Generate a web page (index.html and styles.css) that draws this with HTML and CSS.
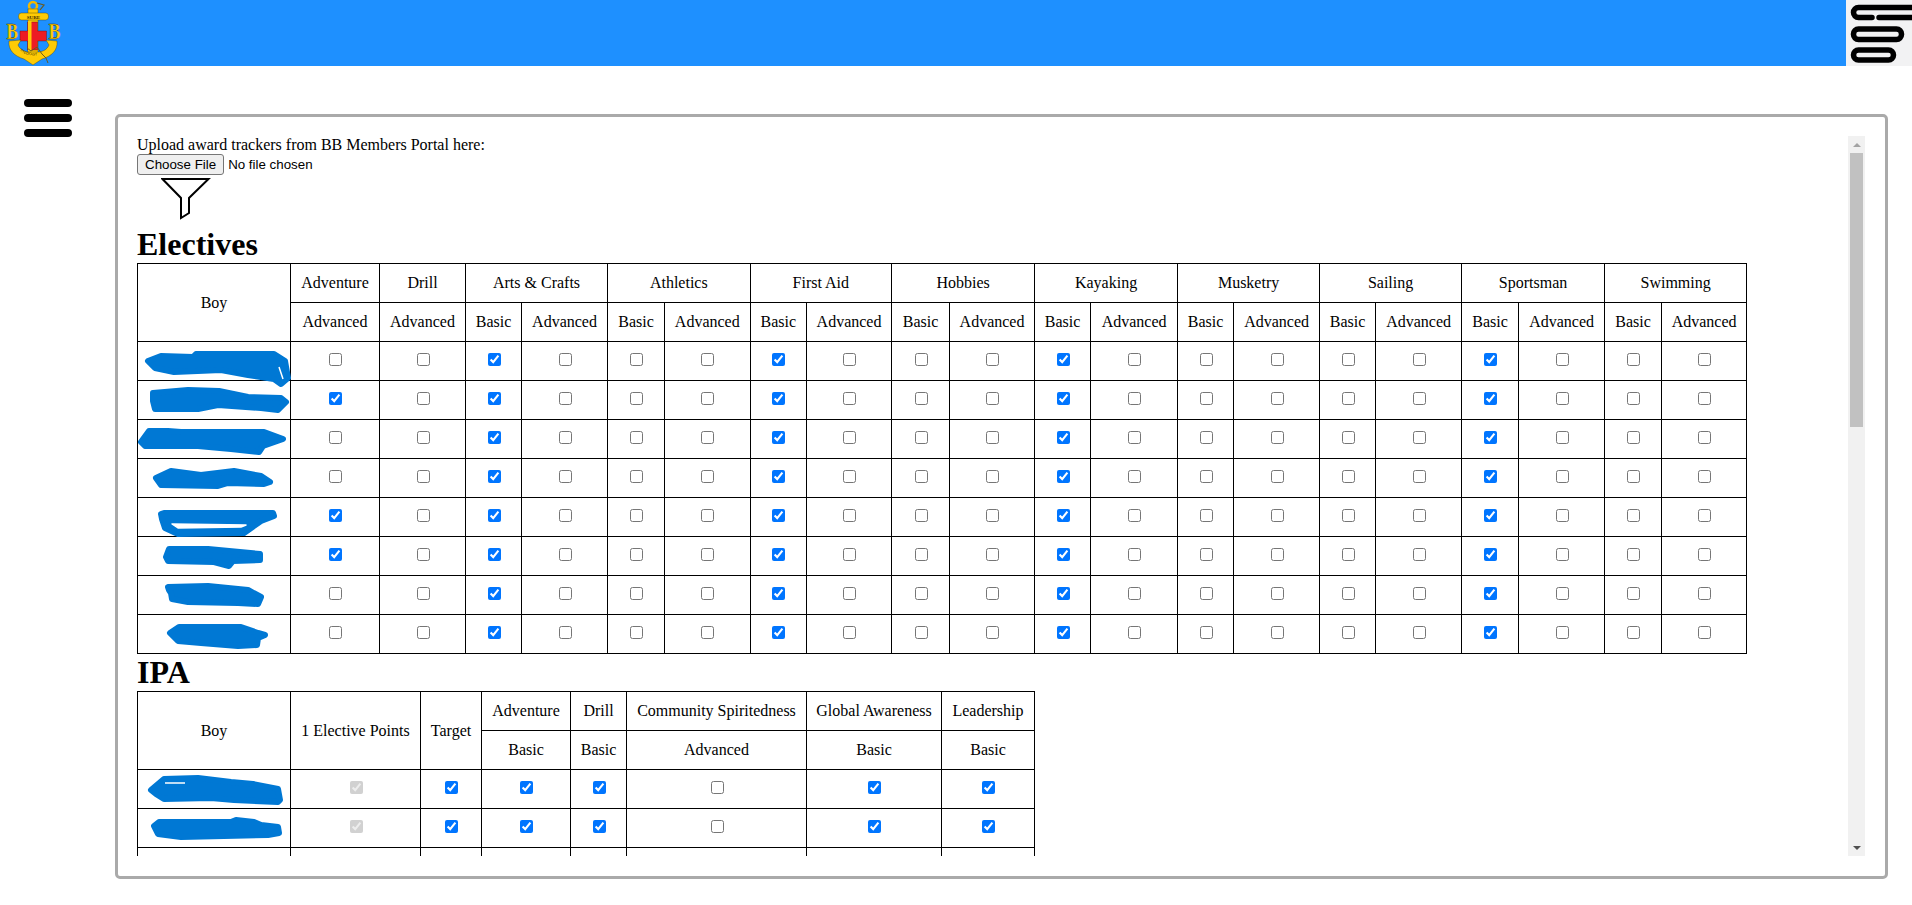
FILE: index.html
```html
<!DOCTYPE html>
<html lang="en">
<head>
    <meta charset="UTF-8">
    <meta name="viewport" content="width=device-width, initial-scale=1.0">
    <title>Award Tracker</title>
    <link rel="stylesheet" href="styles.css">
</head>
<body>
    <div class="header">
        <svg class="logo" viewBox="0 0 66 66">
            <circle cx="33" cy="6" r="4" fill="none" stroke="#f2b800" stroke-width="2.5"/>
            <path d="M37 3 L44 5 L40 10" fill="none" stroke="#6a5a20" stroke-width="1.2"/>
            <rect x="28" y="9" width="10" height="48" fill="#ffcb05" stroke="#4a3c00" stroke-width=".4"/>
            <path d="M27.5 22 H37.5 V31 H46.5 V41 H37.5 V50 H27.5 V41 H20 V31 H27.5 Z" fill="#ed1c24" stroke="#5a1010" stroke-width=".4"/>
            <rect x="28" y="21" width="3.5" height="30" fill="#ffcb05"/>
            <rect x="18.5" y="13" width="30" height="7" rx="3" fill="#ffcb05" stroke="#4a3c00" stroke-width=".4"/>
            <text class="logo-motto" x="33.5" y="18.6" text-anchor="middle">SURE</text>
            <text class="logo-letter" x="6.5" y="38.5" textLength="11.5" lengthAdjust="spacingAndGlyphs">B</text>
            <text class="logo-letter" x="48.5" y="38.5" textLength="12" lengthAdjust="spacingAndGlyphs">B</text>
            <path d="M9 41 L21 40 L18 45 C20 50 26 52 28 52 L38 52 C42 52 47 50 49 45 L46 40 L57 41 C58 50 52 56 42 59 L33 65 L24 59 C14 56 8 50 9 41 Z" fill="#ffcb05" stroke="#4a3c00" stroke-width=".4"/>
            <path d="M27 48 L31 51 L37 47 L42 54 L46 58 L48 63" fill="none" stroke="#6a5a20" stroke-width="1"/>
            <path id="logo-arc" d="M20 50 C26 57 40 57 46 52" fill="none"/>
            <text class="logo-small"><textPath href="#logo-arc">STEDFAST</textPath></text>
        </svg>
        <div class="menu-button">
            <svg viewBox="0 0 66 66" width="66" height="66">
                <path d="M66 7.5 H12.5 a5 5 0 0 0 0 10 H26 M33 17.5 H66" fill="none" stroke="#000" stroke-width="5.5" stroke-linecap="round"/>
                <rect x="7.5" y="29" width="48" height="10.5" rx="5" fill="none" stroke="#000" stroke-width="5.5"/>
                <rect x="7.5" y="50" width="40" height="10" rx="5" fill="none" stroke="#000" stroke-width="5.5"/>
            </svg>
        </div>
    </div>

    <div class="main">
        <div class="sidebar">
            <div class="burger">
                <span class="burger-bar"></span>
                <span class="burger-bar"></span>
                <span class="burger-bar"></span>
            </div>
        </div>

        <div class="panel">
            <div class="panel-scroll">
                <div class="panel-content">
                    Upload award trackers from BB Members Portal here:<br>
                    <input class="file-input" type="file"><br>
                    <svg class="filter-icon" viewBox="0 0 50 51" width="50" height="51">
                        <path d="M1.5 4 H47.5 L28 23 V38 L20 43 V23 Z" fill="#fff" stroke="#000" stroke-width="2"/>
                    </svg>

                    <h1 class="section-title">Electives</h1>
                    <table class="tracker electives">
                        <colgroup>
                            <col width="153"><col width="89"><col width="86">
                            <col width="56"><col width="86"><col width="57"><col width="85.5"><col width="56.5"><col width="85">
                            <col width="58"><col width="85"><col width="56"><col width="87"><col width="56"><col width="86">
                            <col width="56"><col width="86"><col width="57"><col width="86"><col width="57"><col width="85">
                        </colgroup>
                        <tr>
                            <th rowspan="2">Boy</th>
                            <th>Adventure</th><th>Drill</th>
                            <th colspan="2">Arts &amp; Crafts</th><th colspan="2">Athletics</th><th colspan="2">First Aid</th>
                            <th colspan="2">Hobbies</th><th colspan="2">Kayaking</th><th colspan="2">Musketry</th>
                            <th colspan="2">Sailing</th><th colspan="2">Sportsman</th><th colspan="2">Swimming</th>
                        </tr>
                        <tr>
                            <th>Advanced</th><th>Advanced</th>
                            <th>Basic</th><th>Advanced</th><th>Basic</th><th>Advanced</th><th>Basic</th><th>Advanced</th>
                            <th>Basic</th><th>Advanced</th><th>Basic</th><th>Advanced</th><th>Basic</th><th>Advanced</th>
                            <th>Basic</th><th>Advanced</th><th>Basic</th><th>Advanced</th><th>Basic</th><th>Advanced</th>
                        </tr>
                        <tr>
                            <td class="boy"><svg class="scribble" viewBox="0 0 152 38"><path id="boy1" d="M10 19 L23 14 L55 15 L58 12 L136 12 L147 19 L150 36 L143 42 L136 37 L110 33 L83 28 L36 30 L17 26 Z"/><path class="scribble-gap" d="M141 25 L145 37"/></svg></td>
                            <td><input type="checkbox"></td><td><input type="checkbox"></td>
                            <td><input type="checkbox" checked></td><td><input type="checkbox"></td><td><input type="checkbox"></td><td><input type="checkbox"></td><td><input type="checkbox" checked></td><td><input type="checkbox"></td>
                            <td><input type="checkbox"></td><td><input type="checkbox"></td><td><input type="checkbox" checked></td><td><input type="checkbox"></td><td><input type="checkbox"></td><td><input type="checkbox"></td>
                            <td><input type="checkbox"></td><td><input type="checkbox"></td><td><input type="checkbox" checked></td><td><input type="checkbox"></td><td><input type="checkbox"></td><td><input type="checkbox"></td>
                        </tr>
                        <tr>
                            <td class="boy"><svg class="scribble" viewBox="0 0 152 38"><path id="boy2" d="M15 12 L50 9 L81 10 L110 16 L143 17 L148 21 L140 29 L123 27 L80 24 L60 28 L17 28 L15 20 Z"/></svg></td>
                            <td><input type="checkbox" checked></td><td><input type="checkbox"></td>
                            <td><input type="checkbox" checked></td><td><input type="checkbox"></td><td><input type="checkbox"></td><td><input type="checkbox"></td><td><input type="checkbox" checked></td><td><input type="checkbox"></td>
                            <td><input type="checkbox"></td><td><input type="checkbox"></td><td><input type="checkbox" checked></td><td><input type="checkbox"></td><td><input type="checkbox"></td><td><input type="checkbox"></td>
                            <td><input type="checkbox"></td><td><input type="checkbox"></td><td><input type="checkbox" checked></td><td><input type="checkbox"></td><td><input type="checkbox"></td><td><input type="checkbox"></td>
                        </tr>
                        <tr>
                            <td class="boy"><svg class="scribble" viewBox="0 0 152 38"><path id="boy3" d="M3 22 L11 11 L30 11 L43 12 L106 12 L126 12 L145 19 L125 26 L121 32 L93 29 L60 26 L7 26 Z"/></svg></td>
                            <td><input type="checkbox"></td><td><input type="checkbox"></td>
                            <td><input type="checkbox" checked></td><td><input type="checkbox"></td><td><input type="checkbox"></td><td><input type="checkbox"></td><td><input type="checkbox" checked></td><td><input type="checkbox"></td>
                            <td><input type="checkbox"></td><td><input type="checkbox"></td><td><input type="checkbox" checked></td><td><input type="checkbox"></td><td><input type="checkbox"></td><td><input type="checkbox"></td>
                            <td><input type="checkbox"></td><td><input type="checkbox"></td><td><input type="checkbox" checked></td><td><input type="checkbox"></td><td><input type="checkbox"></td><td><input type="checkbox"></td>
                        </tr>
                        <tr>
                            <td class="boy"><svg class="scribble" viewBox="0 0 152 38"><path id="boy4" d="M18 19 L33 12 L63 16 L96 12 L123 17 L132 23 L126 25 L90 24 L80 27 L23 26 Z"/></svg></td>
                            <td><input type="checkbox"></td><td><input type="checkbox"></td>
                            <td><input type="checkbox" checked></td><td><input type="checkbox"></td><td><input type="checkbox"></td><td><input type="checkbox"></td><td><input type="checkbox" checked></td><td><input type="checkbox"></td>
                            <td><input type="checkbox"></td><td><input type="checkbox"></td><td><input type="checkbox" checked></td><td><input type="checkbox"></td><td><input type="checkbox"></td><td><input type="checkbox"></td>
                            <td><input type="checkbox"></td><td><input type="checkbox"></td><td><input type="checkbox" checked></td><td><input type="checkbox"></td><td><input type="checkbox"></td><td><input type="checkbox"></td>
                        </tr>
                        <tr>
                            <td class="boy"><svg class="scribble" viewBox="0 0 152 38"><path id="boy5" d="M23 16 L26 15 L135 15 L136 18 L123 23 L106 35 L40 36 L27 30 L24 21 Z"/><path class="scribble-gap" d="M34 26 L108 27 L103 29 L40 30 Z"/></svg></td>
                            <td><input type="checkbox" checked></td><td><input type="checkbox"></td>
                            <td><input type="checkbox" checked></td><td><input type="checkbox"></td><td><input type="checkbox"></td><td><input type="checkbox"></td><td><input type="checkbox" checked></td><td><input type="checkbox"></td>
                            <td><input type="checkbox"></td><td><input type="checkbox"></td><td><input type="checkbox" checked></td><td><input type="checkbox"></td><td><input type="checkbox"></td><td><input type="checkbox"></td>
                            <td><input type="checkbox"></td><td><input type="checkbox"></td><td><input type="checkbox" checked></td><td><input type="checkbox"></td><td><input type="checkbox"></td><td><input type="checkbox"></td>
                        </tr>
                        <tr>
                            <td class="boy"><svg class="scribble" viewBox="0 0 152 38"><path id="boy6" d="M31 12 L70 12 L122 17 L122 23 L95 24 L91 29 L76 25 L30 24 L28 20 Z"/></svg></td>
                            <td><input type="checkbox" checked></td><td><input type="checkbox"></td>
                            <td><input type="checkbox" checked></td><td><input type="checkbox"></td><td><input type="checkbox"></td><td><input type="checkbox"></td><td><input type="checkbox" checked></td><td><input type="checkbox"></td>
                            <td><input type="checkbox"></td><td><input type="checkbox"></td><td><input type="checkbox" checked></td><td><input type="checkbox"></td><td><input type="checkbox"></td><td><input type="checkbox"></td>
                            <td><input type="checkbox"></td><td><input type="checkbox"></td><td><input type="checkbox" checked></td><td><input type="checkbox"></td><td><input type="checkbox"></td><td><input type="checkbox"></td>
                        </tr>
                        <tr>
                            <td class="boy"><svg class="scribble" viewBox="0 0 152 38"><path id="boy7" d="M30 11 L70 10 L110 14 L123 21 L120 28 L100 27 L50 26 L34 23 L33 17 L31 14 Z"/></svg></td>
                            <td><input type="checkbox"></td><td><input type="checkbox"></td>
                            <td><input type="checkbox" checked></td><td><input type="checkbox"></td><td><input type="checkbox"></td><td><input type="checkbox"></td><td><input type="checkbox" checked></td><td><input type="checkbox"></td>
                            <td><input type="checkbox"></td><td><input type="checkbox"></td><td><input type="checkbox" checked></td><td><input type="checkbox"></td><td><input type="checkbox"></td><td><input type="checkbox"></td>
                            <td><input type="checkbox"></td><td><input type="checkbox"></td><td><input type="checkbox" checked></td><td><input type="checkbox"></td><td><input type="checkbox"></td><td><input type="checkbox"></td>
                        </tr>
                        <tr>
                            <td class="boy"><svg class="scribble" viewBox="0 0 152 38"><path id="boy8" d="M32 18 L41 12 L103 12 L120 18 L127 20 L120 23 L119 30 L100 31 L63 28 L40 26 Z"/></svg></td>
                            <td><input type="checkbox"></td><td><input type="checkbox"></td>
                            <td><input type="checkbox" checked></td><td><input type="checkbox"></td><td><input type="checkbox"></td><td><input type="checkbox"></td><td><input type="checkbox" checked></td><td><input type="checkbox"></td>
                            <td><input type="checkbox"></td><td><input type="checkbox"></td><td><input type="checkbox" checked></td><td><input type="checkbox"></td><td><input type="checkbox"></td><td><input type="checkbox"></td>
                            <td><input type="checkbox"></td><td><input type="checkbox"></td><td><input type="checkbox" checked></td><td><input type="checkbox"></td><td><input type="checkbox"></td><td><input type="checkbox"></td>
                        </tr>
                    </table>

                    <h1 class="section-title">IPA</h1>
                    <table class="tracker ipa">
                        <colgroup>
                            <col width="153"><col width="130"><col width="61"><col width="89"><col width="56"><col width="180"><col width="135"><col width="93">
                        </colgroup>
                        <tr>
                            <th rowspan="2">Boy</th><th rowspan="2">1 Elective Points</th><th rowspan="2">Target</th>
                            <th>Adventure</th><th>Drill</th><th>Community Spiritedness</th><th>Global Awareness</th><th>Leadership</th>
                        </tr>
                        <tr>
                            <th>Basic</th><th>Basic</th><th>Advanced</th><th>Basic</th><th>Basic</th>
                        </tr>
                        <tr>
                            <td class="boy"><svg class="scribble" viewBox="0 0 152 38"><path d="M13 20 L26 9 L60 8 L93 12 L115 14 L140 19 L142 30 L140 32 L96 30 L73 28 L26 29 L18 24 Z"/><path class="scribble-gap" d="M27 13 L47 13"/></svg></td>
                            <td><input type="checkbox" checked disabled></td><td><input type="checkbox" checked></td><td><input type="checkbox" checked></td><td><input type="checkbox" checked></td>
                            <td><input type="checkbox"></td><td><input type="checkbox" checked></td><td><input type="checkbox" checked></td>
                        </tr>
                        <tr>
                            <td class="boy"><svg class="scribble" viewBox="0 0 152 38"><path d="M16 17 L21 13 L93 13 L98 11 L116 13 L123 16 L140 18 L141 24 L130 26 L43 28 L20 25 Z"/></svg></td>
                            <td><input type="checkbox" checked disabled></td><td><input type="checkbox" checked></td><td><input type="checkbox" checked></td><td><input type="checkbox" checked></td>
                            <td><input type="checkbox"></td><td><input type="checkbox" checked></td><td><input type="checkbox" checked></td>
                        </tr>
                        <tr>
                            <td class="boy"><svg class="scribble" viewBox="0 0 152 38"><use href="#boy3" y="2"/></svg></td>
                            <td><input type="checkbox" checked disabled></td><td><input type="checkbox" checked></td><td><input type="checkbox" checked></td><td><input type="checkbox" checked></td>
                            <td><input type="checkbox"></td><td><input type="checkbox" checked></td><td><input type="checkbox" checked></td>
                        </tr>
                    </table>
                </div>
                <div class="scrollbar">
                    <div class="scroll-button"><span class="arrow-up"></span></div>
                    <div class="scroll-track"><div class="scroll-thumb"></div></div>
                    <div class="scroll-button"><span class="arrow-down"></span></div>
                </div>
            </div>
        </div>
    </div>
</body>
</html>
```

FILE: styles.css
```css
html, body{
    height: 100%;
}
body{
    margin: 0;
    overflow: hidden;
    background-color: white;
    color: black;
    font-family: "Liberation Serif", "Times New Roman", serif;
    font-size: 16px;
}
.header{
    display: flex;
    justify-content: space-between;
    height: 66px;
    background-color: dodgerblue;
}
.logo{
    display: block;
    width: 66px;
    height: 66px;
}
.logo-motto{
    font-family: "Liberation Serif", serif;
    font-size: 5px;
    font-weight: bold;
    fill: #3a2c00;
}
.logo-letter{
    font-family: "Liberation Serif", serif;
    font-size: 24px;
    font-weight: bold;
    fill: #ffcb05;
    stroke: #3a2c00;
    stroke-width: .3px;
}
.logo-small{
    font-family: "Liberation Sans", sans-serif;
    font-size: 3.6px;
    fill: #3a2c00;
}
.menu-button{
    width: 66px;
    height: 66px;
    overflow: hidden;
    background-color: #f2f2f3;
}
.main{
    display: flex;
    height: calc(100% - 66px);
}
.sidebar{
    flex: 0 0 115px;
}
.burger{
    display: flex;
    flex-direction: column;
    gap: 7px;
    width: 48px;
    margin-top: 33px;
    margin-left: 24px;
}
.burger-bar{
    height: 8px;
    border-radius: 4px;
    background-color: black;
}
.panel{
    flex: 1;
    box-sizing: border-box;
    height: 765px;
    margin-top: 48px;
    margin-right: 24px;
    padding: 19px 20px 20px 19px;
    border: 3px solid #aaa;
    border-radius: 5px;
}
.panel-scroll{
    display: flex;
    height: 100%;
}
.panel-content{
    flex: 1;
    overflow: hidden;
}
.scrollbar{
    display: flex;
    flex-direction: column;
    flex: 0 0 17px;
    background-color: #f1f1f1;
}
.scroll-button{
    display: flex;
    align-items: center;
    justify-content: center;
    height: 17px;
}
.arrow-up{
    border-left: 4px solid transparent;
    border-right: 4px solid transparent;
    border-bottom: 4px solid #a3a3a3;
}
.arrow-down{
    border-left: 4px solid transparent;
    border-right: 4px solid transparent;
    border-top: 4px solid #505050;
}
.scroll-track{
    flex: 1;
}
.scroll-thumb{
    height: 274px;
    margin: 0 2px;
    background-color: #c1c1c1;
}
.file-input{
    font-family: "Liberation Sans", Arial, sans-serif;
    font-size: 13.333px;
}
.file-input::file-selector-button{
    height: 21px;
    padding: 1px 7px;
    margin-right: 4px;
    border: 1px solid #767676;
    border-radius: 3px;
    background-color: #efefef;
    font-family: "Liberation Sans", Arial, sans-serif;
    font-size: 13.333px;
}
.filter-icon{
    display: block;
    margin-left: 24px;
}
.section-title{
    margin: 0;
    font-size: 32px;
    font-weight: bold;
}
.tracker{
    border-collapse: collapse;
    table-layout: fixed;
}
.electives{
    width: 1609px;
}
.ipa{
    width: 897px;
}
.tracker th, .tracker td{
    padding: 10px 0;
    border: 1px solid black;
    font-weight: normal;
    text-align: center;
    white-space: nowrap;
}
.tracker td{
    padding: 8px 0 10px;
}
.tracker .boy{
    padding: 0;
}
.scribble{
    display: block;
    width: 152px;
    height: 38px;
    overflow: visible;
    fill: #0078d4;
    stroke: #0078d4;
    stroke-width: 6px;
    stroke-linejoin: round;
}
.scribble-gap{
    fill: white;
    stroke: white;
    stroke-width: 1.5px;
}
```
